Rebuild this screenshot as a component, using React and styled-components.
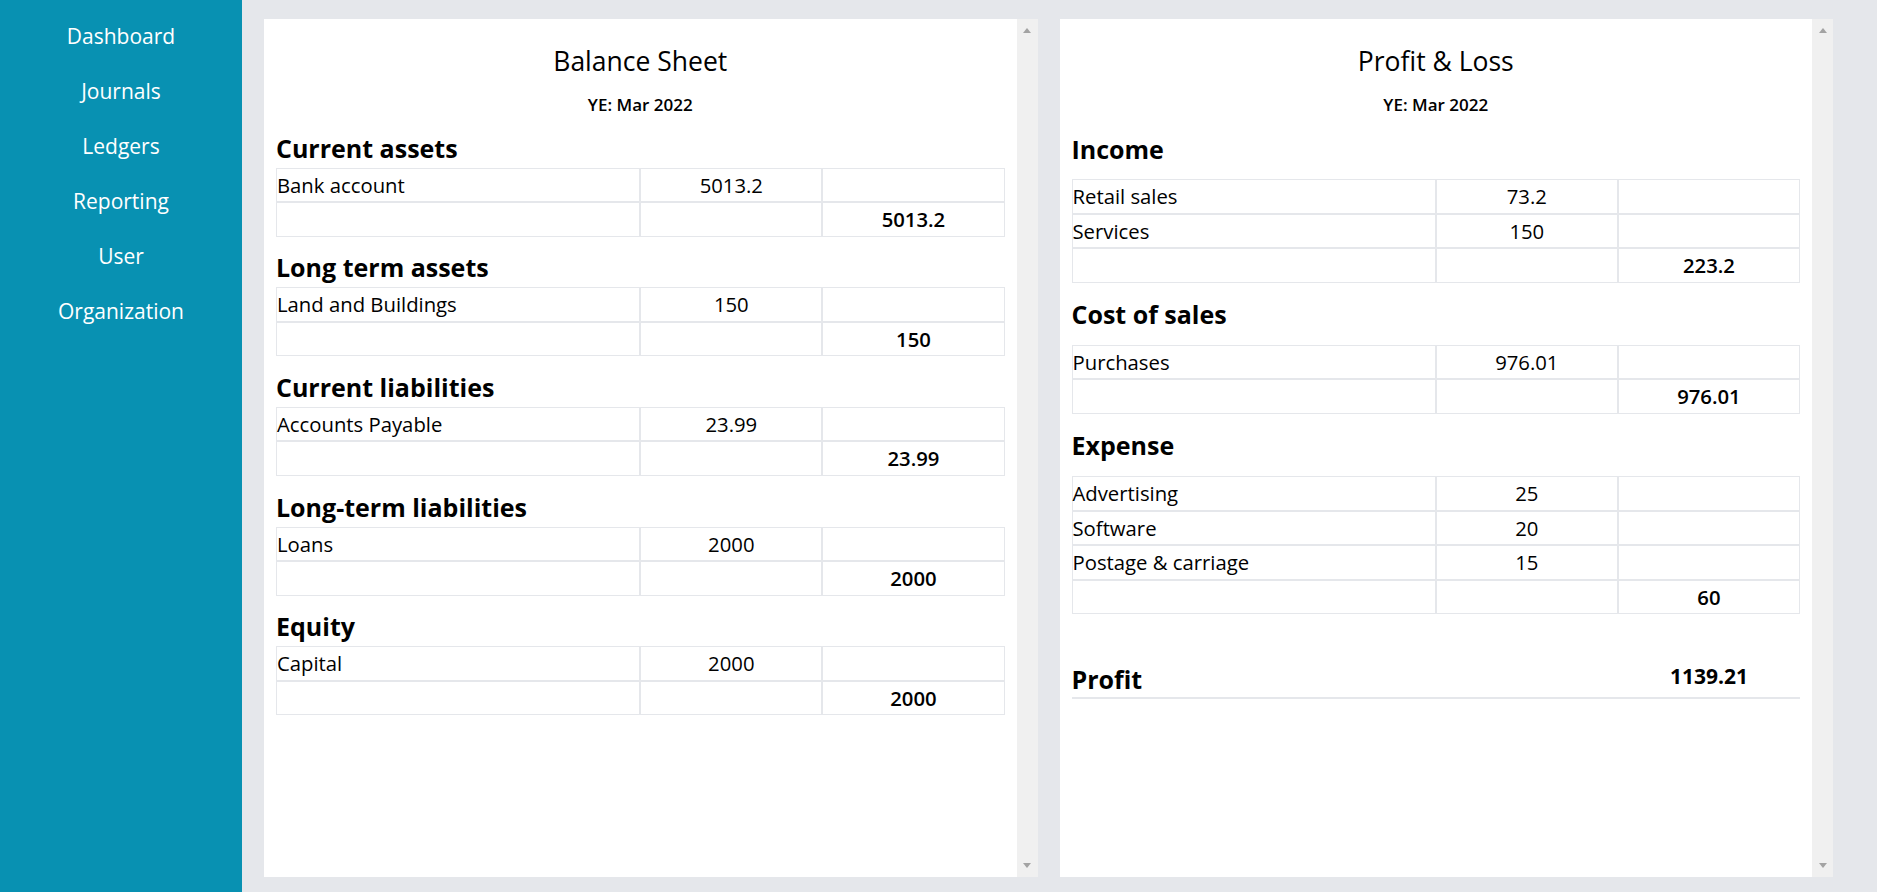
import styled, { createGlobalStyle } from 'styled-components';

const GlobalStyle = createGlobalStyle`
  html, body {
    margin: 0;
    padding: 0;
  }
  body {
    font-family: "Open Sans", "Noto Sans", sans-serif;
    color: #000;
  }
  * { box-sizing: border-box; }
`;

const Layout = styled.div`
  display: flex;
  height: 100vh;
  min-height: 892px;
`;

const Sidebar = styled.nav`
  width: 242px;
  flex-shrink: 0;
  background: #0891b2;
  display: flex;
  flex-direction: column;
  align-items: center;
  padding-top: 9px;
`;

const NavItem = styled.a`
  color: #fff;
  font-size: 21px;
  line-height: 55px;
  text-decoration: none;
  cursor: pointer;
`;

const Main = styled.main`
  flex: 1;
  background: #e5e7eb;
  display: flex;
  gap: 22px;
  padding: 19px 44px 15px 22px;
`;

const Panel = styled.section`
  flex: 1;
  display: flex;
  background: #fff;
  min-width: 0;
`;

const PanelBody = styled.div`
  flex: 1;
  padding: 24px 12px 0;
  overflow: hidden;
`;

const ScrollTrack = styled.div`
  width: 21px;
  background: #f0f0f0;
  display: flex;
  flex-direction: column;
  justify-content: space-between;
  align-items: center;
  padding: 9px 0;
`;

const Arrow = styled.span`
  width: 0;
  height: 0;
  border-left: 4.5px solid transparent;
  border-right: 4.5px solid transparent;
  ${p => (p.$down ? 'border-top: 5px solid #a3a3a3;' : 'border-bottom: 5px solid #a3a3a3;')}
`;

const Title = styled.h1`
  margin: 0;
  text-align: center;
  font-size: 26.5px;
  font-weight: 400;
  line-height: 36px;
`;

const Period = styled.div`
  margin-top: 14px;
  text-align: center;
  font-size: 17px;
  font-weight: 600;
  line-height: 24px;
`;

const Heading = styled.h2`
  font-size: 25px;
  font-weight: 700;
  line-height: 30px;
  margin: ${p => (p.$spaced ? '16.5px 0 15.5px' : '15.5px 0 5px')};
`;

const Table = styled.table`
  width: 100%;
  table-layout: fixed;
  border-collapse: separate;
  border-spacing: 0;
`;

const Cell = styled.td`
  border: 1px solid #e5e7eb;
  padding: 0;
  padding-top: 1px;
  font-size: 20.3px;
  line-height: 31.6px;
  white-space: nowrap;
  text-align: ${p => (p.$label ? 'left' : 'center')};
  font-weight: ${p => (p.$total ? 600 : 400)};
`;

const ProfitRow = styled.div`
  margin-top: 49.7px;
  display: grid;
  grid-template-columns: 2fr 1fr 1fr;
  align-items: start;
  padding-bottom: 3px;
  border-bottom: 2px solid #e5e7eb;
`;

const ProfitLabel = styled.div`
  font-size: 25px;
  font-weight: 700;
  line-height: 30px;
`;

const ProfitValue = styled.div`
  grid-column: 3;
  text-align: center;
  font-size: 21px;
  font-weight: 700;
  line-height: 24px;
`;

const balanceSheet = [
  { title: 'Current assets', rows: [['Bank account', '5013.2']], total: '5013.2' },
  { title: 'Long term assets', rows: [['Land and Buildings', '150']], total: '150' },
  { title: 'Current liabilities', rows: [['Accounts Payable', '23.99']], total: '23.99' },
  { title: 'Long-term liabilities', rows: [['Loans', '2000']], total: '2000' },
  { title: 'Equity', rows: [['Capital', '2000']], total: '2000' },
];

const profitLoss = [
  { title: 'Income', rows: [['Retail sales', '73.2'], ['Services', '150']], total: '223.2' },
  { title: 'Cost of sales', rows: [['Purchases', '976.01']], total: '976.01' },
  {
    title: 'Expense',
    rows: [['Advertising', '25'], ['Software', '20'], ['Postage & carriage', '15']],
    total: '60',
  },
];

function Section({ section, spaced }) {
  return (
    <>
      <Heading $spaced={spaced}>{section.title}</Heading>
      <Table>
        <colgroup>
          <col style={{ width: '50%' }} />
          <col style={{ width: '25%' }} />
          <col style={{ width: '25%' }} />
        </colgroup>
        <tbody>
          {section.rows.map(([name, amount]) => (
            <tr key={name}>
              <Cell $label>{name}</Cell>
              <Cell>{amount}</Cell>
              <Cell />
            </tr>
          ))}
          <tr>
            <Cell $label />
            <Cell />
            <Cell $total>{section.total}</Cell>
          </tr>
        </tbody>
      </Table>
    </>
  );
}

function ReportPanel({ title, children }) {
  return (
    <Panel>
      <PanelBody>
        <Title>{title}</Title>
        <Period>YE: Mar 2022</Period>
        {children}
      </PanelBody>
      <ScrollTrack>
        <Arrow />
        <Arrow $down />
      </ScrollTrack>
    </Panel>
  );
}

const navItems = ['Dashboard', 'Journals', 'Ledgers', 'Reporting', 'User', 'Organization'];

export default function App() {
  return (
    <>
      <GlobalStyle />
      <Layout>
        <Sidebar>
          {navItems.map(item => (
            <NavItem key={item}>{item}</NavItem>
          ))}
        </Sidebar>
        <Main>
          <ReportPanel title="Balance Sheet">
            {balanceSheet.map(s => (
              <Section key={s.title} section={s} />
            ))}
          </ReportPanel>
          <ReportPanel title="Profit & Loss">
            {profitLoss.map(s => (
              <Section key={s.title} section={s} spaced />
            ))}
            <ProfitRow>
              <ProfitLabel>Profit</ProfitLabel>
              <ProfitValue>1139.21</ProfitValue>
            </ProfitRow>
          </ReportPanel>
        </Main>
      </Layout>
    </>
  );
}
